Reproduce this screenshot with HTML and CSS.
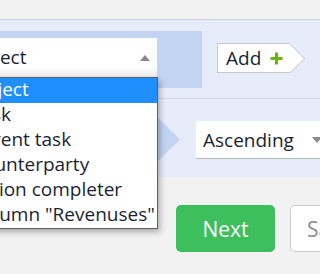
FILE: index.html
```html
<!DOCTYPE html>
<html>
<head>
<meta charset="utf-8">
<link rel="stylesheet" href="styles.css">
</head>
<body>
<div class="top-strip"></div>
<div class="panel">
  <div class="row row-first">
    <div class="field-block">
      <div class="select-wrap">
        <div class="select open">
          <span class="select-value">Select</span>
          <span class="arrow-up"></span>
        </div>
        <ul class="options">
          <li class="option selected">Object</li>
          <li class="option">Task</li>
          <li class="option">Parent task</li>
          <li class="option">Counterparty</li>
          <li class="option">Action completer</li>
          <li class="option">Column "Revenuses"</li>
        </ul>
      </div>
    </div>
    <button class="add-btn">Add <svg class="plus" width="13" height="13" viewBox="0 0 13 13"><path d="M6.5 0.5V12.5M0.5 6.5H12.5" stroke="#68b800" stroke-width="3"/></svg></button>
  </div>
  <div class="row row-second">
    <div class="chevron"></div>
    <div class="select sort">
      <span class="select-value">Ascending</span>
      <span class="arrow-down"></span>
    </div>
  </div>
</div>
<div class="actions">
  <button class="btn btn-next">Next</button>
  <button class="btn btn-save">Save</button>
</div>
</body>
</html>
```
FILE: styles.css
```css
html, body {
  margin: 0;
  padding: 0;
}
body {
  background: #f2f2f2;
  font-family: "Open Sans", "Liberation Sans", sans-serif;
  font-size: 19px;
  color: #1b1f35;
  width: 320px;
  height: 274px;
  overflow: hidden;
}
.top-strip {
  height: 19px;
  border-bottom: 1px solid #cbd1dd;
}
.panel {
  background: #e6ecfa;
}
.row {
  display: flex;
  align-items: flex-start;
}
.row-first {
  height: 78px;
  border-bottom: 1px solid #cfd6e6;
}
.field-block {
  flex-shrink: 0;
  margin-left: -40px;
  margin-top: 11px;
  width: 242px;
  height: 50px;
  padding-top: 7px;
  background: #c3d4f2;
  box-sizing: content-box;
}
.select-wrap {
  position: relative;
  width: 198px;
}
.select {
  display: flex;
  align-items: center;
  justify-content: space-between;
  height: 39px;
  line-height: 39px;
  box-sizing: border-box;
  background: linear-gradient(#ffffff 72%, #ebebeb);
}
.select.open {
  padding-left: 14px;
  padding-right: 7px;
  border-right: 1px solid #d4d4d4;
}
.arrow-up {
  width: 0;
  height: 0;
  border-left: 5.5px solid transparent;
  border-right: 5.5px solid transparent;
  border-bottom: 6px solid #8a8a8a;
}
.arrow-down {
  width: 0;
  height: 0;
  border-left: 5.5px solid transparent;
  border-right: 5.5px solid transparent;
  border-top: 6px solid #8a8a8a;
}
.options {
  position: absolute;
  left: 0;
  top: 39px;
  width: 198px;
  box-sizing: border-box;
  margin: 0;
  padding: 0;
  list-style: none;
  background: #fff;
  border: 1px solid #5f5f5f;
  box-shadow: 2px 3px 6px rgba(0, 0, 0, 0.3);
  z-index: 5;
}
.option {
  height: 25px;
  line-height: 23px;
  padding-left: 10px;
  white-space: nowrap;
}
.option.selected {
  background: #1e8ffd;
  color: #fff;
}
.add-btn {
  flex-shrink: 0;
  position: relative;
  margin-top: 23px;
  margin-left: 15px;
  display: inline-flex;
  align-items: center;
  height: 30px;
  box-sizing: border-box;
  padding: 0 7px 0 8px;
  border: 1px solid #c9c9c9;
  border-right: none;
  background: #fff;
  font-family: inherit;
  font-size: 19px;
  line-height: 28px;
  color: #1b1f35;
}
.add-btn::after {
  content: "";
  position: absolute;
  right: -10.5px;
  top: 3.5px;
  width: 21px;
  height: 21px;
  box-sizing: border-box;
  background: #fff;
  border-top: 1px solid #c9c9c9;
  border-right: 1px solid #c9c9c9;
  transform: rotate(45deg);
}
.plus {
  margin-left: 9px;
  position: relative;
  z-index: 1;
}
.row-second {
  height: 78px;
}
.chevron {
  flex-shrink: 0;
  margin-left: -40px;
  margin-top: 18px;
  width: 220px;
  height: 45px;
  background: #c3d4f2;
  clip-path: polygon(0 0, 197px 0, 100% 50%, 197px 100%, 0 100%);
}
.select.sort {
  margin-top: 22px;
  margin-left: 16px;
  width: 133px;
  flex-shrink: 0;
  height: 38px;
  line-height: 38px;
  padding-left: 7px;
  padding-right: 7px;
  background: #fff;
  border-bottom: 1px solid #b9b9b9;
}
.actions {
  display: flex;
  gap: 15px;
  padding-left: 176px;
  margin-top: 28px;
}
.btn {
  flex-shrink: 0;
  height: 47px;
  box-sizing: border-box;
  border-radius: 5px;
  font-family: inherit;
  font-size: 21px;
  padding: 0;
}
.btn-next {
  width: 99px;
  background: #3dbf5e;
  border: none;
  color: #fff;
}
.btn-save {
  width: 90px;
  background: #fff;
  border: 1px solid #cccccc;
  color: #8c8c8c;
  text-align: left;
  padding-left: 16px;
}
```
